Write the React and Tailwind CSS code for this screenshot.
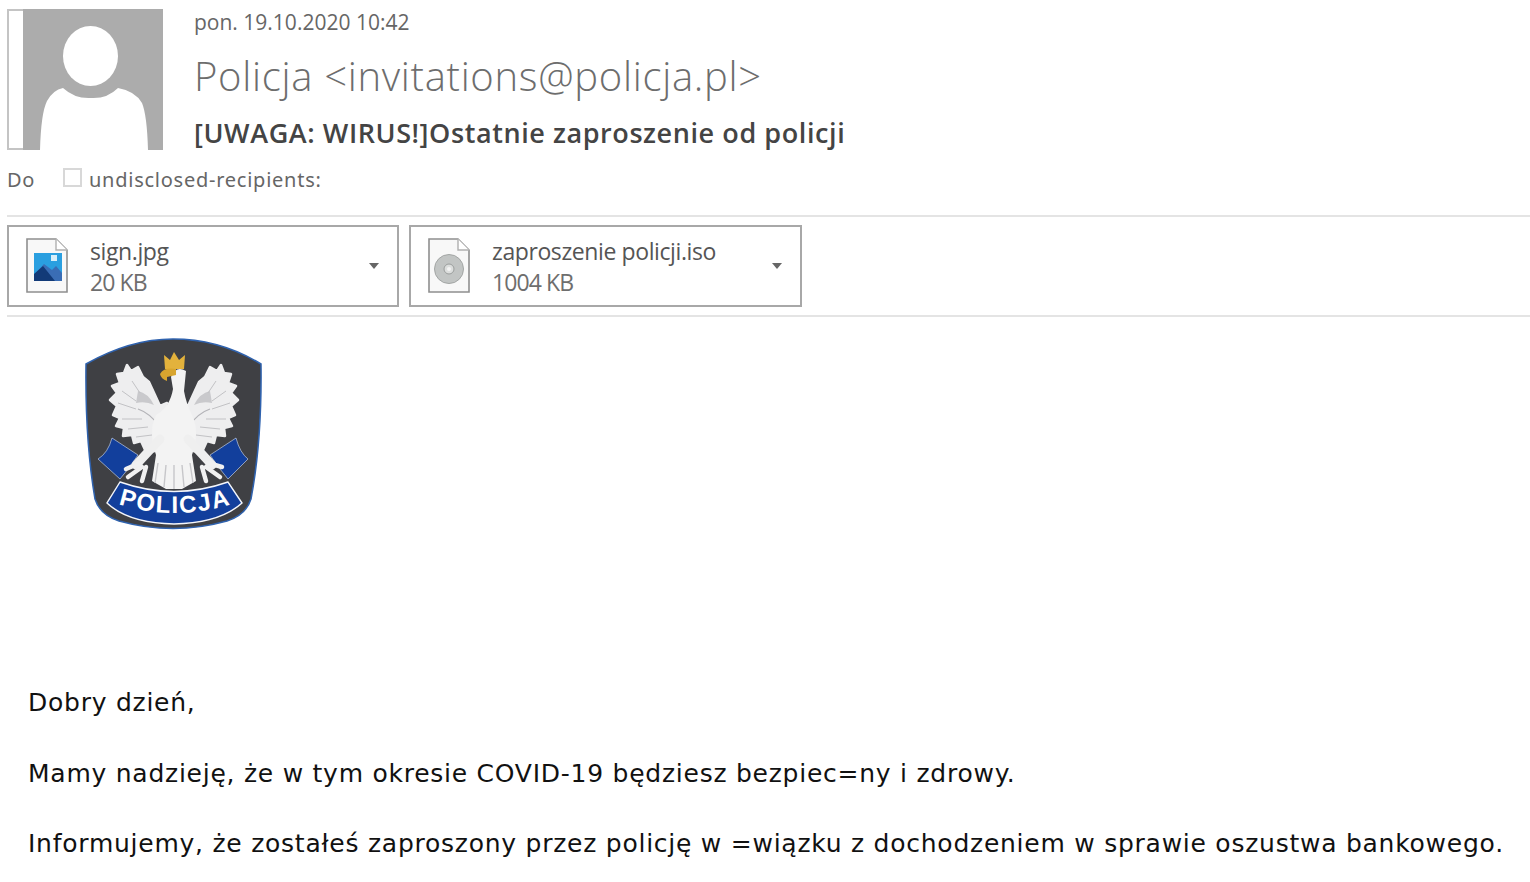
import React from "react";

const headerFont = "font-['Open_Sans','Noto_Sans',sans-serif]";

const PolicjaBadge = () => {
    const wing = (
        <g>
            <path
                d="M85 64 L79 51 L73 46 L68 36 L61 40 L57 34 L54 42 L47 43 L50 52 L42 55 L47 62 L40 69 L47 75 L43 84 L50 87 L46 95 L54 97 L53 105 L62 104 L64 112 L71 110 L76 121 L85 120 L92 98 L84 88 L93 82 L97 72 L90 75 Z"
                fill="#eeeeef"
                stroke="#eeeeef"
                strokeWidth="2.5"
                strokeLinejoin="round"
            />
            <path d="M68 60 Q78 62 84 74 Q76 70 66 72 Z" fill="#c9c9cc" />
            <path d="M62 50 L70 62 M52 60 L66 70 M48 72 L66 78 M52 88 L72 88 M58 98 L78 96 M66 106 L82 104" stroke="#c2c2c5" strokeWidth="1" fill="none" />
            <path d="M68 78 Q80 82 90 96" stroke="#b3b3b7" strokeWidth="1.3" fill="none" />
        </g>
    );
    return (
        <svg width="210" height="205" viewBox="0 0 210 205">
            <path
                d="M16 33 Q60 8 103 8 Q150 8 191 33 Q192 110 181 168 Q176 184 157 190 Q103 205 49 190 Q30 184 25 168 Q15 110 16 33 Z"
                fill="#3f4044"
                stroke="#2f62ae"
                strokeWidth="1.5"
            />
            {/* ribbons */}
            <path d="M42 107 L68 124 L58 138 L50 148 L28 128 Q38 122 42 107 Z" fill="#123f9c" stroke="#d9e2f2" strokeWidth="0.6" />
            <path d="M166 107 L140 124 L150 138 L158 148 L178 128 Q170 122 166 107 Z" fill="#123f9c" stroke="#d9e2f2" strokeWidth="0.6" />
            {wing}
            <g transform="translate(208 0) scale(-1 1)">{wing}</g>
            {/* body */}
            <path d="M101 46 Q106 34 116 40 L114 60 Q116 72 122 84 Q130 100 122 124 L126 150 L112 158 L96 158 L82 150 L86 124 Q78 100 86 84 Q100 76 103 58 Z" fill="#f3f3f3" />
            <path d="M90 108 L66 134 M118 108 L142 134" stroke="#efefef" strokeWidth="9" strokeLinecap="round" />
            <path d="M56 138 L70 132 M58 146 L72 136 M72 150 L76 136 M152 136 L138 132 M150 146 L136 136 M136 150 L132 136" stroke="#f1f1f1" strokeWidth="4.5" strokeLinecap="round" />
            <path d="M88 132 L85 152 M96 134 L94 156 M104 134 L104 158 M112 134 L114 156 M120 132 L123 152" stroke="#c6c6c9" strokeWidth="1.4" />
            {/* crown and beak */}
            <path d="M95 38 L94 24 L100 29 L104 21 L109 29 L115 24 L114 38 Z" fill="#e3b23c" />
            <path d="M90 43 Q94 36 106 38 L106 44 L97 46 L97 50 Q91 48 90 43 Z" fill="#d8a52f" />
            {/* banner */}
            <path
                d="M50 151 Q104 170 158 151 L172 172 Q150 192 104 193 Q58 192 37 172 Z"
                fill="#123f9c"
                stroke="#f4f6fb"
                strokeWidth="1.4"
            />
            <path id="policjaArc" d="M42 171 Q104 193 168 171" fill="none" />
            <text fill="#ffffff" fontSize="24" fontWeight="700" fontFamily="'Liberation Sans',sans-serif" letterSpacing="1.6">
                <textPath href="#policjaArc" startOffset="50%" textAnchor="middle">POLICJA</textPath>
            </text>
        </svg>
    );
};

const FileIcon = ({ children }) => (
    <svg width="44" height="58" viewBox="0 0 44 58" className="shrink-0">
        <path d="M2 2 H31 L42 13 V55 H2 Z" fill="#f8f8f8" stroke="#8f8f8f" strokeWidth="1.6" />
        <path d="M31 2 V13 H42" fill="#fff" stroke="#b0b0b0" strokeWidth="1.4" />
        {children}
    </svg>
);

const Attachment = ({ name, size, icon, width }) => (
    <div className={`${width} h-[82px] border-2 border-[#a8a8a8] flex items-center pl-[16px] pr-[18px]`}>
        {icon}
        <div className={`ml-[21px] flex-1 text-[#555] text-[23px] leading-[31px] pt-[1px] ${headerFont} tracking-[-0.4px]`}>
            <div>{name}</div>
            <div className="text-[#6e6e6e] tracking-[-0.9px]">{size}</div>
        </div>
        <div className="w-0 h-0 border-x-[5px] border-x-transparent border-t-[6px] border-t-[#666]" />
    </div>
);

const App = () => {
    return (
        <div className="w-[1530px] h-[882px] bg-white overflow-hidden">
            {/* Nagłówek */}
            <div className="pl-[7px] pt-[9px] flex gap-[31px]">
                <div className="flex h-[141px] w-[156px]">
                    <div className="w-[16px] border-2 border-r-0 border-[#c4c4c4] bg-white" />
                    <svg width="140" height="141" viewBox="0 0 140 141" className="bg-[#acacac]">
                        <ellipse cx="67.5" cy="47" rx="27.5" ry="30" fill="#fff" />
                        <path d="M17 141 Q18 104 24 92 Q30 81 40 79 Q52 90 68 89 Q84 90 95 79 Q112 82 119 94 Q124 106 125 141 Z" fill="#fff" />
                    </svg>
                </div>
                <div className={`${headerFont} -mt-[1px]`}>
                    <div className="text-[21px] leading-[28px] text-[#666]">pon. 19.10.2020 10:42</div>
                    <div className="text-[40px] leading-[56px] mt-[12px] font-light text-[#6d6d6d] tracking-[0.7px]">Policja &lt;invitations@policja.pl&gt;</div>
                    <div className="text-[27px] leading-[38px] mt-[10px] font-semibold text-[#444] tracking-[0.58px]">[UWAGA: WIRUS!]Ostatnie zaproszenie od policji</div>
                </div>
            </div>
            <div className="pl-[7px] h-[30px] mt-[13px] flex items-center text-[#666] text-[20px] font-['Noto_Sans','Open_Sans',sans-serif]">
                <span className="w-[56px] tracking-[0.6px]">Do</span>
                <span className="w-[19px] h-[19px] border-2 border-[#d8d8d8] -mt-[5px] mr-[7px]" />
                <span className="tracking-[0.75px]">undisclosed-recipients:</span>
            </div>

            {/* Załączniki */}
            <div className="ml-[7px] mt-[20px] border-y-2 border-[#e4e4e4] h-[102px] flex items-center gap-[10px]">
                <Attachment
                    name="sign.jpg"
                    size="20 KB"
                    width="w-[392px]"
                    icon={
                        <FileIcon>
                            <rect x="9" y="16" width="28" height="28" fill="#2a9fe0" />
                            <rect x="26" y="18" width="6" height="6" fill="#d8effa" />
                            <path d="M9 38 L19 27 L27 33 L31 29 L37 36 V44 H9 Z" fill="#3a6db5" />
                            <path d="M9 44 V37 L18 29 L30 44 Z" fill="#123a78" />
                        </FileIcon>
                    }
                />
                <Attachment
                    name="zaproszenie policji.iso"
                    size="1004 KB"
                    width="w-[393px]"
                    icon={
                        <FileIcon>
                            <circle cx="22" cy="32" r="14.5" fill="#c2c5c4" stroke="#a3a6a5" />
                            <circle cx="22" cy="32" r="5" fill="#dcdedd" stroke="#9a9d9c" />
                            <circle cx="22" cy="32" r="2" fill="#f4f4f4" />
                        </FileIcon>
                    }
                />
            </div>

            {/* Treść */}
            <div className="ml-[70px] mt-[14px] h-[205px]">
                <PolicjaBadge />
            </div>
            <div className="pl-[28px] pt-[149px] text-[25px] leading-[35.25px] tracking-[0.75px] text-[#111] font-['DejaVu_Sans',sans-serif] whitespace-nowrap">
                <p className="mb-[35.25px]">Dobry dzień,</p>
                <p className="mb-[35.25px]">Mamy nadzieję, że w tym okresie COVID-19 będziesz bezpiec=ny i zdrowy.</p>
                <p>Informujemy, że zostałeś zaproszony przez policję w =wiązku z dochodzeniem w sprawie oszustwa bankowego.</p>
            </div>
        </div>
    );
};

export default App;
